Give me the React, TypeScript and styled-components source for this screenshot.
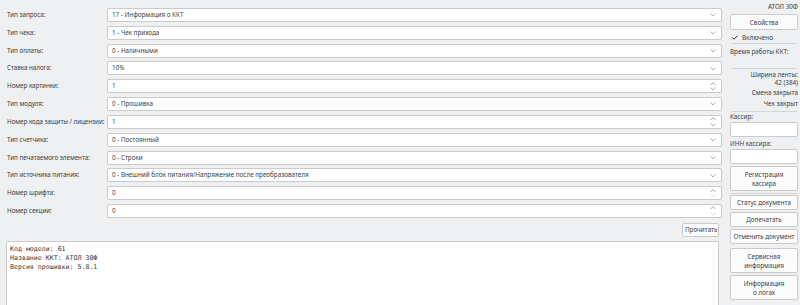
import React, {FC} from 'react';
import styled, {createGlobalStyle} from 'styled-components';

const GlobalStyle = createGlobalStyle`
  html, body {
    margin: 0;
    padding: 0;
    background: #eff0f1;
  }
  body {
    font-family: "Noto Sans", "Open Sans", sans-serif;
    font-size: 6.3px;
    color: #3a3f44;
  }
`

const Window = styled.div`
  width: 800px;
  height: 305px;
  box-sizing: border-box;
  display: flex;
  gap: 8px;
  padding: 0 2px 0 6px;
  overflow: hidden;
  background: #eff0f1;
`

const Main = styled.div`
  flex: 1;
  display: flex;
  flex-direction: column;
  padding-top: 8px;
  min-width: 0;
`

const Form = styled.div`
  display: grid;
  grid-template-columns: 101px 1fr;
  grid-auto-rows: 14px;
  row-gap: 3.82px;
  align-items: center;
`

const Label = styled.div`
  padding-left: 1px;
  white-space: nowrap;
  line-height: 14px;
  letter-spacing: -0.05px;
`

const Field = styled.div`
  height: 14px;
  box-sizing: border-box;
  background: #fff;
  border: 1px solid #c9cbcd;
  border-radius: 2px;
  display: flex;
  align-items: center;
  padding: 0 4px;
  line-height: 12px;
`

const FieldText = styled.span`
  flex: 1;
  white-space: nowrap;
  overflow: hidden;
`

const Arrows = styled.span`
  width: 8px;
  height: 12px;
  display: flex;
  flex-direction: column;
  align-items: center;
  justify-content: center;
  gap: 2px;
`

const ReadRow = styled.div`
  display: flex;
  justify-content: flex-end;
  margin-top: 5px;
  padding-right: 3px;
`

const Button = styled.button<{$tall?: boolean; $gap?: number}>`
  font-family: "Noto Sans", "Open Sans", sans-serif;
  font-size: 6.3px;
  color: #3a3f44;
  background: #fcfcfc;
  border: 1px solid #c9cbcd;
  border-radius: 2px;
  padding: 0 2px;
  margin: ${p => p.$gap ?? 0}px 0 0;
  height: ${p => (p.$tall ? '25px' : '15px')};
  line-height: 9px;
  box-sizing: border-box;
  text-align: center;
  white-space: nowrap;
`

const ReadButton = styled(Button)`
  width: 37px;
  height: 14px;
`

const Output = styled.pre`
  flex: 1;
  margin: 4px 3px 0 0;
  padding: 3px 3px;
  background: #fff;
  border: 1px solid #c9cbcd;
  border-bottom: none;
  border-radius: 2px 2px 0 0;
  font-family: "DejaVu Sans Mono", "Liberation Mono", monospace;
  font-size: 6.6px;
  line-height: 8.8px;
  color: #33383d;
`

const Side = styled.div`
  width: 68px;
  display: flex;
  flex-direction: column;
  padding-top: 2px;
`

const SideText = styled.div<{$right?: boolean; $gap?: number}>`
  text-align: ${p => (p.$right ? 'right' : 'left')};
  line-height: 10px;
  margin-top: ${p => p.$gap ?? 0}px;
  white-space: nowrap;
`

const PropsButton = styled(Button)`
  height: 16px;
`

const Divider = styled.div<{$gap?: number}>`
  height: 1px;
  background: #d4d6d8;
  margin: ${p => p.$gap ?? 0}px 1px 0;
`

const CheckRow = styled.div`
  display: flex;
  align-items: center;
  gap: 4px;
  height: 12px;
  margin-top: 1px;
  padding-left: 2px;
`

const Input = styled.div`
  height: 15px;
  box-sizing: border-box;
  background: #fff;
  border: 1px solid #c9cbcd;
  border-radius: 2px;
`

const Chevron: FC<{up?: boolean; faded?: boolean}> = ({up, faded}) => (
  <svg width="6" height="3.5" viewBox="0 0 6 3.5">
    <path
      d={up ? 'M0.6 3 L3 0.6 L5.4 3' : 'M0.6 0.5 L3 2.9 L5.4 0.5'}
      fill="none"
      stroke={faded ? '#ccd0d3' : '#80858a'}
      strokeWidth="0.7"
    />
  </svg>
)

type Row = {label: string; value: string; spin?: boolean; atMin?: boolean}

const rows: Row[] = [
  {label: 'Тип запроса:', value: '17 - Информация о ККТ'},
  {label: 'Тип чека:', value: '1 - Чек прихода'},
  {label: 'Тип оплаты:', value: '0 - Наличными'},
  {label: 'Ставка налога:', value: '10%'},
  {label: 'Номер картинки:', value: '1', spin: true},
  {label: 'Тип модуля:', value: '0 - Прошивка'},
  {label: 'Номер кода защиты / лицензии:', value: '1', spin: true},
  {label: 'Тип счетчика:', value: '0 - Постоянный'},
  {label: 'Тип печатаемого элемента:', value: '0 - Строки'},
  {label: 'Тип источника питания:', value: '0 - Внешний блок питания/Напряжение после преобразователя'},
  {label: 'Номер шрифта:', value: '0', spin: true, atMin: true},
  {label: 'Номер секции:', value: '0', spin: true, atMin: true},
]

const output = 'Код модели: 61\nНазвание ККТ: АТОЛ 30Ф\nВерсия прошивки: 5.8.1'

const App: FC = () => (
  <Window>
    <GlobalStyle/>
    <Main>
      <Form>
        {rows.map(r => (
          <React.Fragment key={r.label}>
            <Label>{r.label}</Label>
            <Field>
              <FieldText>{r.value}</FieldText>
              <Arrows>
                {r.spin ? (
                  <>
                    <Chevron up/>
                    <Chevron faded={r.atMin}/>
                  </>
                ) : (
                  <Chevron/>
                )}
              </Arrows>
            </Field>
          </React.Fragment>
        ))}
      </Form>
      <ReadRow>
        <ReadButton>Прочитать</ReadButton>
      </ReadRow>
      <Output>{output}</Output>
    </Main>

    <Side>
      <SideText $right>АТОЛ 30Ф</SideText>
      <PropsButton $gap={2}>Свойства</PropsButton>
      <CheckRow>
        <svg width="6" height="5" viewBox="0 0 6 5">
          <path d="M0.5 2.6 L2.2 4.2 L5.5 0.6" fill="none" stroke="#31363b" strokeWidth="1"/>
        </svg>
        <span>Включено</span>
      </CheckRow>
      <Divider $gap={0}/>
      <SideText $gap={3}>Время работы ККТ:</SideText>
      <Divider $gap={11}/>
      <SideText $right $gap={1}>Ширина ленты:</SideText>
      <SideText $right $gap={-2}>42 (384)</SideText>
      <SideText $right $gap={0}>Смена закрыта</SideText>
      <SideText $right $gap={1}>Чек закрыт</SideText>
      <Divider $gap={2}/>
      <SideText $gap={0}>Кассир:</SideText>
      <Input/>
      <SideText $gap={2}>ИНН кассира:</SideText>
      <Input/>
      <Button $tall $gap={2}>Регистрация<br/>кассира</Button>
      <Divider $gap={2}/>
      <Button $gap={1}>Статус документа</Button>
      <Button $gap={2}>Допечатать</Button>
      <Button $gap={2}>Отменить документ</Button>
      <Button $tall $gap={4}>Сервисная<br/>информация</Button>
      <Button $tall $gap={2}>Информация<br/>о логах</Button>
    </Side>
  </Window>
)

export default App
